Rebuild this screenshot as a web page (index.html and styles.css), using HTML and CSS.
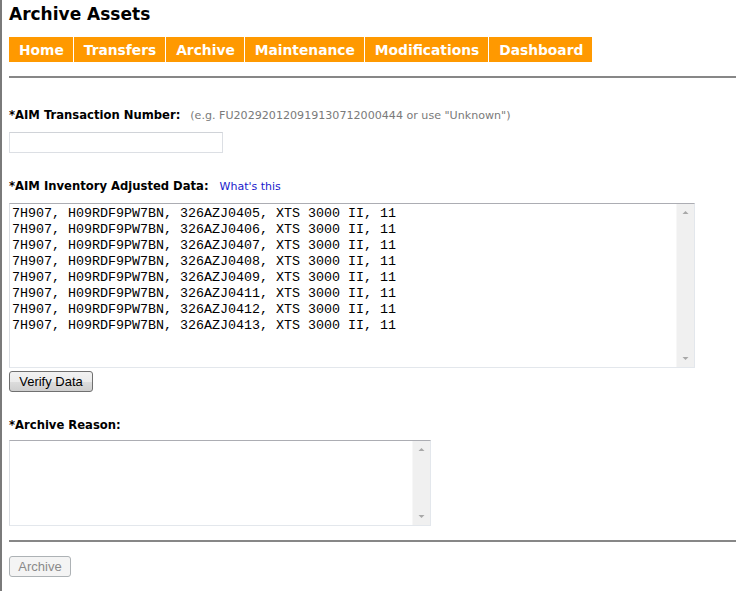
FILE: index.html
```html
<!DOCTYPE html>
<html>
<head>
<meta charset="utf-8">
<title>Archive Assets</title>
<link rel="stylesheet" href="styles.css">
</head>
<body>
<div class="page">
  <h1 class="title">Archive Assets</h1>
  <nav class="nav">
    <a class="nav-item">Home</a>
    <a class="nav-item">Transfers</a>
    <a class="nav-item">Archive</a>
    <a class="nav-item">Maintenance</a>
    <a class="nav-item">Modifications</a>
    <a class="nav-item">Dashboard</a>
  </nav>
  <hr class="rule rule-top">

  <div class="field field-txn">
    <div class="label-row"><span class="label">*AIM Transaction Number:</span><span class="hint">(e.g. FU202920120919130712000444 or use "Unknown")</span></div>
    <input class="text-input" type="text">
  </div>

  <div class="field field-data">
    <div class="label-row"><span class="label">*AIM Inventory Adjusted Data:</span><a class="help-link">What's this</a></div>
    <div class="area area-data">
      <textarea class="area-text mono">7H907, H09RDF9PW7BN, 326AZJ0405, XTS 3000 II, 11
7H907, H09RDF9PW7BN, 326AZJ0406, XTS 3000 II, 11
7H907, H09RDF9PW7BN, 326AZJ0407, XTS 3000 II, 11
7H907, H09RDF9PW7BN, 326AZJ0408, XTS 3000 II, 11
7H907, H09RDF9PW7BN, 326AZJ0409, XTS 3000 II, 11
7H907, H09RDF9PW7BN, 326AZJ0411, XTS 3000 II, 11
7H907, H09RDF9PW7BN, 326AZJ0412, XTS 3000 II, 11
7H907, H09RDF9PW7BN, 326AZJ0413, XTS 3000 II, 11</textarea>
      <div class="scrollbar">
        <svg class="arrow" width="17" height="17" viewBox="0 0 17 17"><path d="M5.5 10 L8.5 7 L11.5 10 Z" fill="#a8a8a8"/></svg>
        <svg class="arrow" width="17" height="17" viewBox="0 0 17 17"><path d="M5.5 7 L8.5 10 L11.5 7 Z" fill="#a8a8a8"/></svg>
      </div>
    </div>
    <button class="btn btn-verify" type="button">Verify Data</button>
  </div>

  <div class="field field-reason">
    <div class="label-row"><span class="label">*Archive Reason:</span></div>
    <div class="area area-reason">
      <textarea class="area-text"></textarea>
      <div class="scrollbar">
        <svg class="arrow" width="17" height="17" viewBox="0 0 17 17"><path d="M5.5 10 L8.5 7 L11.5 10 Z" fill="#a8a8a8"/></svg>
        <svg class="arrow" width="17" height="17" viewBox="0 0 17 17"><path d="M5.5 7 L8.5 10 L11.5 7 Z" fill="#a8a8a8"/></svg>
      </div>
    </div>
  </div>

  <hr class="rule rule-bottom">
  <button class="btn btn-disabled" type="button" disabled>Archive</button>
</div>
</body>
</html>
```

FILE: styles.css
```css
html, body {
  margin: 0;
  padding: 0;
  background: #ffffff;
}
body {
  min-height: 591px;
  border-left: 2px solid #7a7a7a;
  box-sizing: border-box;
  font-family: "DejaVu Sans", Verdana, sans-serif;
  color: #000;
}
.page {
  padding: 0 0 0 7px;
}
.title {
  margin: 0;
  padding-top: 4px;
  font-size: 17px;
  line-height: 20px;
  font-weight: bold;
  height: 33px;
}
.nav {
  display: flex;
  width: max-content;
  height: 25px;
  background: #ff9900;
}
.nav-item {
  display: flex;
  align-items: center;
  padding: 0 9px 0 10px;
  color: #ffffff;
  font-size: 13.8px;
  font-weight: bold;
  border-right: 1px solid #ffffff;
}
.nav-item:last-child {
  border-right: none;
}
.rule {
  border: none;
  height: 2px;
  background: #878787;
  margin: 0;
}
.rule-top {
  margin-top: 14px;
}
.field-txn {
  padding-top: 30px;
}
.label-row {
  display: flex;
  align-items: baseline;
  height: 17px;
}
.label {
  font-size: 11.6px;
  font-weight: bold;
}
.hint {
  font-size: 11.1px;
  color: #7a7a7a;
  margin-left: 10px;
}
.help-link {
  font-size: 11px;
  color: #1a1acc;
  margin-left: 11px;
}
.text-input {
  display: block;
  margin: 7px 0 0 0;
  width: 214px;
  height: 21px;
  box-sizing: border-box;
  border: 1px solid #dcdfe4;
  border-top-color: #d0d3d8;
  background: #fff;
  padding: 0;
}
.field-data {
  padding-top: 26px;
}
.area {
  display: flex;
  box-sizing: border-box;
  border: 1px solid #e3e7ec;
  border-top-color: #acadb3;
  border-left-color: #dbdee3;
  margin-top: 7px;
}
.area-data {
  width: 686px;
  height: 165px;
}
.area-reason {
  width: 422px;
  height: 86px;
  margin-top: 5px;
}
.area-text {
  flex: 1;
  border: none;
  outline: none;
  resize: none;
  margin: 0;
  padding: 2px 2px;
  background: #fff;
  overflow: hidden;
}
.mono {
  font-family: "Liberation Mono", "Courier New", monospace;
  font-size: 13.33px;
  line-height: 16px;
  color: #000;
}
.scrollbar {
  width: 17px;
  background: #f0f0f0;
  border-left: 1px solid #f7f7f7;
  display: flex;
  flex-direction: column;
  justify-content: space-between;
}
.arrow {
  display: block;
}
.btn {
  display: block;
  font-family: "Liberation Sans", Arial, sans-serif;
  font-size: 13px;
  height: 21px;
  box-sizing: border-box;
  border-radius: 3px;
  padding: 0;
  margin: 0;
}
.btn-verify {
  margin-top: 3px;
  width: 84px;
  color: #000;
  border: 1px solid #707070;
  background: linear-gradient(to bottom, #f2f2f2 0%, #ebebeb 50%, #dddddd 51%, #cfcfcf 100%);
}
.field-reason {
  padding-top: 26px;
}
.rule-bottom {
  margin-top: 14px;
}
.btn-disabled {
  margin-top: 14px;
  width: 62px;
  color: #8a8a8a;
  border: 1px solid #adb2b5;
  background: #f4f4f4;
}
```
